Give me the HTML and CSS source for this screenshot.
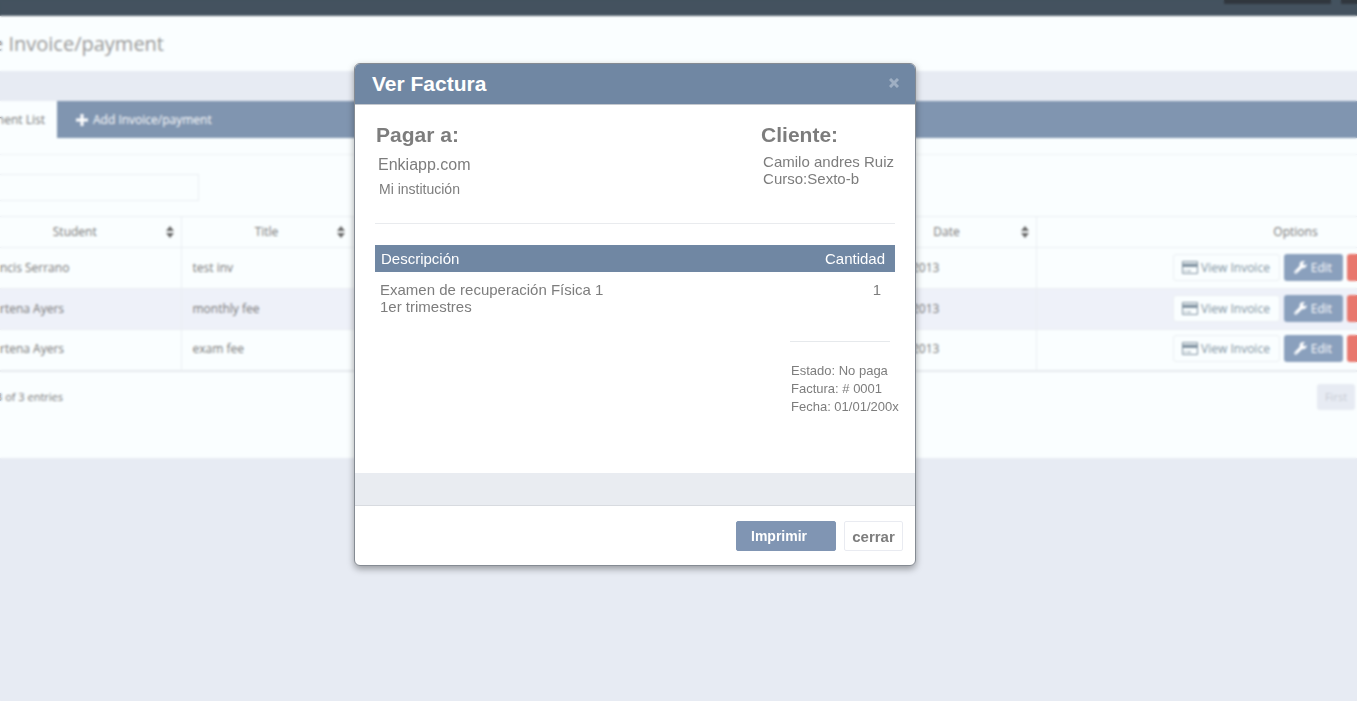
FILE: index.html
```html
<!DOCTYPE html>
<html lang="es">
<head>
<meta charset="utf-8">
<title>Ver Factura</title>
<link rel="stylesheet" href="styles.css">
</head>
<body>
<svg class="defs" aria-hidden="true">
  <symbol id="sort" viewBox="0 0 8 12"><path d="M4 0 8 5H0zM4 12 0 7h8z"/></symbol>
  <symbol id="card" viewBox="0 0 16 13"><path fill-rule="evenodd" d="M1 0h14a1 1 0 0 1 1 1v11a1 1 0 0 1-1 1H1a1 1 0 0 1-1-1V1a1 1 0 0 1 1-1zm0 1v1.500h14V1zm0 5v6h14V6zm1 3.500h2v1H2zm3 0h4v1H5z"/></symbol>
  <symbol id="wrench" viewBox="0 0 14 14"><path fill-rule="evenodd" d="M13.600 3.200 11.500 4.500 9.800 3.500V2L12 .6C10 -.4 7.400.2 6.400 2.100 5.900 3.100 5.900 4.200 6.200 5.200L.7 10.700a1.600 1.600 0 0 0 2.400 2.500L8.700 7.700C11.500 8.500 14.200 6.200 13.600 3.200zM2 11.200a.7.700 0 1 1 0 1.400.7.700 0 0 1 0-1.400z"/></symbol>
</svg>
<div class="page">
  <header class="topbar"><span class="chip chip-wide"></span><span class="chip"></span></header>
  <h1 class="page-title">e Invoice/payment</h1>
  <main class="panel">
    <nav class="tabs">
      <a class="tab tab-active" href="#list">ment List</a>
      <a class="tab" href="#add"><svg class="icon-plus" viewBox="0 0 12 12"><path d="M4.500 0h3v4.500H12v3H7.500V12h-3V7.500H0v-3h4.500z"/></svg>Add Invoice/payment</a>
    </nav>
    <div class="filter"><input class="search" type="text" aria-label="Search"></div>
    <table class="list">
      <colgroup><col class="c-student"><col class="c-title"><col><col class="c-date"><col class="c-options"></colgroup>
      <thead>
        <tr>
          <th class="h-student">Student<svg class="sort"><use href="#sort"/></svg></th>
          <th>Title<svg class="sort"><use href="#sort"/></svg></th>
          <th></th>
          <th>Date<svg class="sort"><use href="#sort"/></svg></th>
          <th>Options</th>
        </tr>
      </thead>
      <tbody>
        <tr><td>ncis Serrano</td><td>test inv</td><td></td><td class="year">2013</td>
          <td><div class="actions"><button class="btn btn-view"><svg class="icon-card"><use href="#card"/></svg>View Invoice</button><button class="btn btn-edit"><svg class="icon-wrench"><use href="#wrench"/></svg>Edit</button><button class="btn btn-delete" aria-label="Delete"></button></div></td></tr>
        <tr class="alt"><td>rtena Ayers</td><td>monthly fee</td><td></td><td class="year">2013</td>
          <td><div class="actions"><button class="btn btn-view"><svg class="icon-card"><use href="#card"/></svg>View Invoice</button><button class="btn btn-edit"><svg class="icon-wrench"><use href="#wrench"/></svg>Edit</button><button class="btn btn-delete" aria-label="Delete"></button></div></td></tr>
        <tr><td>rtena Ayers</td><td>exam fee</td><td></td><td class="year">2013</td>
          <td><div class="actions"><button class="btn btn-view"><svg class="icon-card"><use href="#card"/></svg>View Invoice</button><button class="btn btn-edit"><svg class="icon-wrench"><use href="#wrench"/></svg>Edit</button><button class="btn btn-delete" aria-label="Delete"></button></div></td></tr>
      </tbody>
    </table>
    <footer class="pager"><span class="count">3 of 3 entries</span><button class="first" disabled>First</button></footer>
  </main>
</div>

<div class="overlay">
  <section class="modal" role="dialog" aria-labelledby="modal-title">
    <header class="modal-head">
      <h2 id="modal-title">Ver Factura</h2>
      <button class="close" aria-label="Cerrar"><svg viewBox="0 0 10 10"><path d="M1 1 9 9M9 1 1 9"/></svg></button>
    </header>
    <div class="modal-body">
      <div class="parties">
        <div class="payee">
          <h3>Pagar a:</h3>
          <p class="company">Enkiapp.com</p>
          <p class="school">Mi institución</p>
        </div>
        <div class="client">
          <h3>Cliente:</h3>
          <p>Camilo andres Ruiz<br>Curso:Sexto-b</p>
        </div>
      </div>
      <table class="items">
        <thead><tr><th>Descripción</th><th class="qty">Cantidad</th></tr></thead>
        <tbody><tr><td>Examen de recuperación Física 1<br>1er trimestres</td><td class="qty">1</td></tr></tbody>
      </table>
      <div class="summary">
        <p>Estado: No paga</p>
        <p>Factura: # 0001</p>
        <p>Fecha: 01/01/200x</p>
      </div>
    </div>
    <div class="strip"></div>
    <footer class="modal-foot">
      <button class="action print">Imprimir</button>
      <button class="action dismiss">cerrar</button>
    </footer>
  </section>
</div>
</body>
</html>
```
FILE: styles.css
```css
* { box-sizing: border-box; }
body { margin: 0; min-height: 100vh; overflow: hidden; background: #e7ebf3; font-family: "Open Sans", sans-serif; font-size: 12px; color: #777; }
h1, h2, h3, p { margin: 0; }
button { font: inherit; cursor: pointer; }
.defs { position: absolute; width: 0; height: 0; }
svg { fill: currentColor; }

/* Page behind the dialog */
.page { overflow: hidden; }
.topbar { display: flex; justify-content: flex-end; gap: 10px; height: 16px; background: #44525f; border-bottom: 1px solid #5d6874; }
.chip { width: 16px; height: 4px; background: #30373e; }
.chip-wide { width: 107px; }
.page-title { height: 55px; background: #fafeff; color: #999; font-size: 20px; font-weight: 400; line-height: 56px; text-indent: -8px; }
.panel { margin-top: 30px; padding-bottom: 48px; background: #fafeff; }
.tabs { display: flex; height: 37px; background: #8095b0; }
.tab { display: flex; align-items: center; padding: 0 19px; color: #fff; text-decoration: none; }
.tab-active { width: 57px; padding: 0 12px 0 0; justify-content: flex-end; background: #fafeff; color: #777; white-space: nowrap; }
.icon-plus { width: 12px; height: 12px; margin-right: 5px; }
.filter { margin-top: 16px; padding: 19px 0 15px; border-top: 1px solid #eef1f5; }
.search { display: block; width: 199px; height: 27px; border: 1px solid #eaeef2; border-left: 0; background: transparent; }
.list { width: calc(100% + 198px); table-layout: fixed; border-collapse: collapse; border-bottom: 2px solid #e6eaee; }
.c-student { width: 181px; }
.c-title { width: 171px; }
.c-date { width: 180px; }
.c-options { width: 518px; }
.list th, .list td { border: 1px solid #eaeef2; border-left: 0; padding: 0 0 2px; text-align: left; white-space: nowrap; }
.list th { position: relative; height: 31px; font-weight: 400; text-align: center; }
.list .h-student { padding-right: 31px; }
.list td { height: 41px; padding-left: 11px; }
.list td:first-child { padding-left: 0; }
.list .year { padding-left: 55px; }
.list td:last-child { padding-left: 0; }
.sort { position: absolute; right: 7px; top: 9px; width: 8px; height: 12px; color: #666; }
.alt { background: #eef1f9; }
.actions { display: flex; justify-content: center; gap: 4px; }
.btn { display: flex; align-items: center; justify-content: center; height: 27px; padding: 0; border: 1px solid transparent; border-radius: 3px; }
.btn-view { width: 107px; gap: 3px; background: #fafeff; border-color: #eaeef2; color: #8294a2; }
.btn-edit { width: 59px; gap: 4px; background: #8aa0bd; color: #fff; }
.btn-delete { width: 72px; background: #e8776d; }
.icon-card { width: 16px; height: 13px; }
.icon-wrench { width: 13px; height: 13px; }
.pager { display: flex; justify-content: space-between; align-items: center; margin-top: 12px; padding-right: 2px; }
.count { margin-left: -4px; font-size: 11px; }
.first { width: 38px; height: 26px; padding: 0; border: 0; border-radius: 3px; background: #e7ebf3; color: #c8ccd4; font-size: 11px; }

/* Dialog */
.overlay { position: fixed; inset: 0; display: flex; justify-content: center; align-items: flex-start; padding: 63px 87px 0 0; backdrop-filter: blur(1.2px); font-family: "Liberation Sans", Arial, sans-serif; color: #7d7d7d; }
.modal { width: 562px; border: 1px solid #858b93; border-radius: 6px; background: #fff; box-shadow: 0 3px 7px rgba(0, 0, 0, .35); overflow: hidden; }
.modal-head { display: flex; align-items: center; justify-content: space-between; height: 41px; padding: 0 16px 0 17px; background: #7087a3; border-bottom: 1px solid #c4c8ce; color: #fff; }
.modal-head h2 { font-size: 21px; }
.close { display: flex; padding: 0 0 3px; border: 0; background: none; color: #9fafc3; }
.close svg { width: 10px; height: 10px; stroke: currentColor; stroke-width: 3; }
.modal-body { min-height: 368px; padding: 18px 20px; font-size: 15px; line-height: 17px; }
.parties { display: flex; justify-content: space-between; height: 101px; border-bottom: 1px solid #e9ebee; }
.parties h3 { font-size: 21px; line-height: 24px; }
.payee { padding-left: 1px; }
.company { margin: 9px 2px 0; font-size: 16px; }
.school { margin: 8px 3px 0; font-size: 14px; }
.client { padding-right: 1px; }
.client p { padding-left: 2px; margin-top: 6px; }
.items { width: 100%; margin-top: 21px; border-collapse: collapse; }
.items th { height: 27px; padding: 0 6px; background: #7087a3; color: #fff; font-weight: 400; text-align: left; }
.items td { padding: 9px 5px; vertical-align: top; }
.items .qty { text-align: right; }
.items th.qty { padding-right: 10px; }
.items td.qty { padding-right: 14px; }
.summary { width: 105px; margin: 17px 0 0 auto; padding: 21px 0 0 1px; font-size: 13px; line-height: 18px; white-space: nowrap; background: linear-gradient(#e6e9ec, #e6e9ec) 0 0 / 100px 1px no-repeat; }
.strip { height: 33px; background: #e9ecf1; border-bottom: 1px solid #d8dbe0; }
.modal-foot { display: flex; justify-content: flex-end; gap: 8px; padding: 15px 12px 14px; }
.action { height: 30px; padding: 0; border: 1px solid #e9ebf1; border-radius: 2px; font-weight: 700; font-size: 15px; }
.print { width: 100px; padding-left: 14px; background: #8095b3; border-color: #8095b3; color: #fff; font-size: 14px; text-align: left; }
.dismiss { width: 59px; background: #fff; color: #7d7d7d; }
```
